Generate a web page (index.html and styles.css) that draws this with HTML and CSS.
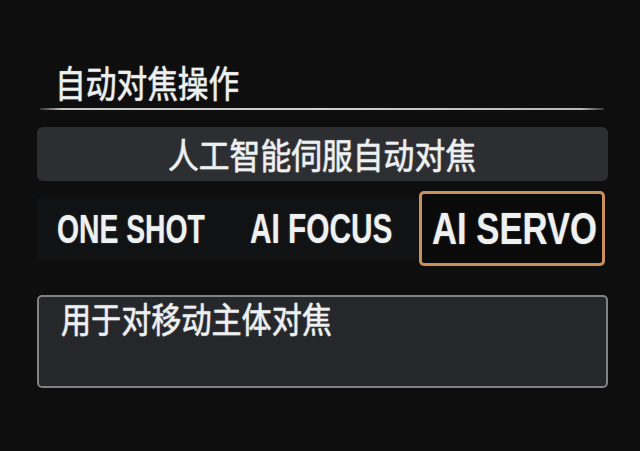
FILE: index.html
```html
<!DOCTYPE html>
<html lang="zh-CN">
<head>
    <meta charset="UTF-8">
    <meta name="viewport" content="width=device-width, initial-scale=1.0">
    <title>自动对焦操作</title>
    <link rel="stylesheet" href="styles.css">
</head>
<body>
    <div class="screen">
        <h1 class="title"><span class="narrow">自动对焦操作</span></h1>
        <div class="rule"></div>

        <div class="current">
            <span class="narrow">人工智能伺服自动对焦</span>
        </div>

        <div class="modes">
            <div class="mode mode-one"><span class="label">ONE SHOT</span></div>
            <div class="mode mode-focus"><span class="label">AI FOCUS</span></div>
            <div class="mode mode-servo selected"><span class="label">AI SERVO</span></div>
        </div>

        <div class="desc">
            <span class="narrow">用于对移动主体对焦</span>
        </div>
    </div>
</body>
</html>
```

FILE: styles.css
```css
html, body {
    margin: 0;
    background-color: #0e0e0e;
}
body {
    font-family: "Noto Sans CJK SC", "Liberation Sans", sans-serif;
    color: #eef1f1;
    width: 640px;
    height: 451px;
    overflow: hidden;
}
.screen {
    padding: 62px 32px 0 37px;
}
/* camera menu font is condensed, so the CJK runs get squeezed */
.narrow {
    display: inline-block;
    white-space: nowrap;
    -webkit-text-stroke: 0.5px #eef1f1;
    text-shadow: 0 0 2px rgba(255, 255, 255, 0.35);
}
.title {
    margin: 0;
    padding-left: 18px;
    font-size: 37px;
    font-weight: 400;
    line-height: 40px;
}
.title .narrow {
    transform: scaleX(0.83);
    transform-origin: left center;
}
.rule {
    height: 2px;
    margin: 6px 4px 0 3px;
    background: linear-gradient(to right, rgba(200, 200, 200, 0.2), #c4c4c4 4%, #d0d0d0 50%, #b8b8b8 96%, rgba(200, 200, 200, 0.2));
}
.current {
    margin-top: 17px;
    height: 54px;
    border-radius: 6px;
    background-color: #2d2e32;
    text-align: center;
    font-size: 35px;
    line-height: 54px;
}
.current .narrow {
    transform: scaleX(0.88);
}
.modes {
    display: flex;
    align-items: center;
    margin-top: 10px;
    height: 75px;
    font-family: "Liberation Sans", Arial, sans-serif;
    font-weight: 700;
}
.mode {
    box-sizing: border-box;
    white-space: nowrap;
}
.mode .label {
    display: inline-block;
    transform-origin: left center;
    text-shadow: 0 0 2px rgba(255, 255, 255, 0.35);
}
.mode-one {
    width: 213px;
    height: 62px;
    padding-left: 20px;
    background-color: #111214;
    font-size: 41px;
    line-height: 62px;
}
.mode-one .label {
    transform: scaleX(0.69);
}
.mode-focus {
    width: 169px;
    height: 62px;
    background-color: #111214;
    font-size: 42px;
    line-height: 62px;
}
.mode-focus .label {
    transform: scaleX(0.71);
}
.mode-servo {
    width: 186px;
    height: 75px;
    padding-left: 10px;
    border: 3px solid #c8915c;
    border-radius: 5px;
    background-color: #0a0a0a;
    font-size: 45px;
    line-height: 69px;
}
.mode-servo .label {
    transform: scaleX(0.77);
}
.desc {
    margin-top: 29px;
    height: 93px;
    box-sizing: border-box;
    padding-left: 22px;
    border: 2px solid #808286;
    border-radius: 5px;
    background-color: #25272b;
    font-size: 35px;
    line-height: 42px;
}
.desc .narrow {
    transform: scaleX(0.86);
    transform-origin: left center;
}
```
